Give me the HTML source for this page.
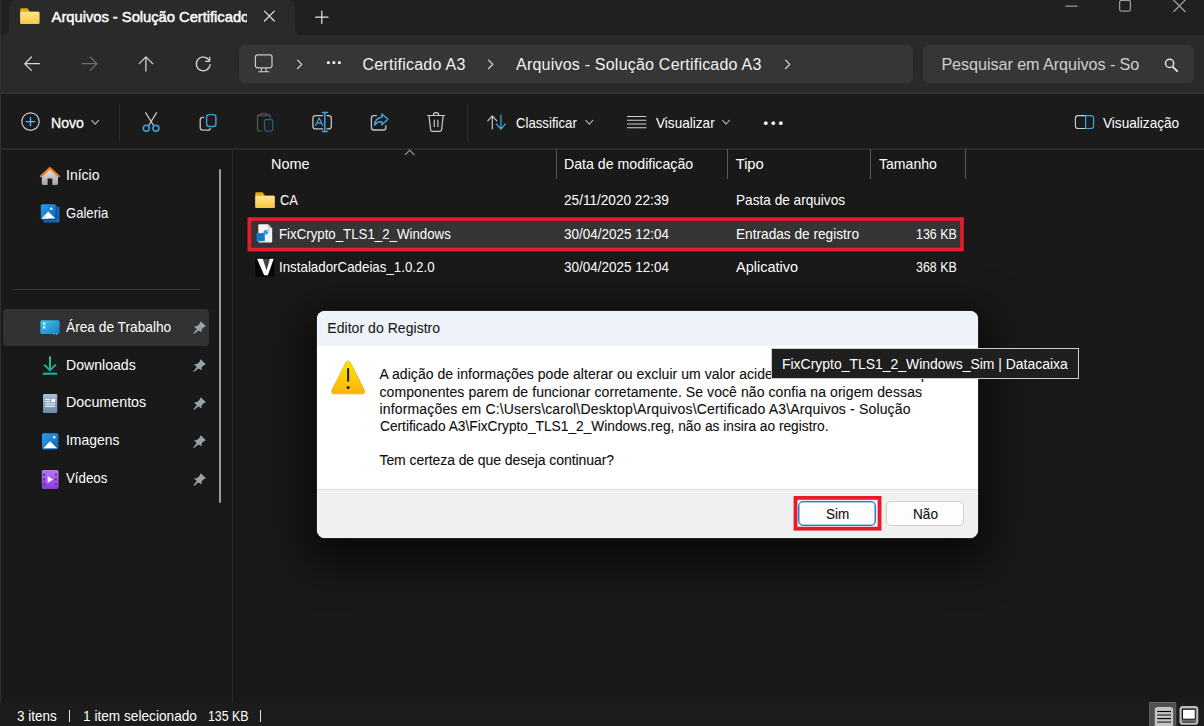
<!DOCTYPE html>
<html lang="pt-BR">
<head>
<meta charset="utf-8">
<title>Arquivos - Solução Certificado A3</title>
<style>
*{box-sizing:border-box;margin:0;padding:0}
html,body{width:1204px;height:726px;overflow:hidden;background:#191919}
body{font-family:"Liberation Sans",sans-serif;color:#fff;position:relative;font-size:14px}
.a{position:absolute}
.t{position:absolute;white-space:nowrap;line-height:1;transform-origin:0 0;}
svg{position:absolute;overflow:visible}
#titlebar{left:0;top:0;width:1204px;height:35px;background:#202020}
#tab{left:9px;top:0;width:286px;height:35px;background:#2a2a2a;border-radius:7px 7px 0 0}
#tabl{left:3px;top:29px;width:6px;height:6px;background:radial-gradient(circle at 0 0,#202020 5.6px,#2a2a2a 6.2px)}
#tabr{left:295px;top:29px;width:6px;height:6px;background:radial-gradient(circle at 100% 0,#202020 5.6px,#2a2a2a 6.2px)}
#addr{left:0;top:35px;width:1204px;height:57px;background:#2a2a2a}
#addrline{left:0;top:92px;width:1204px;height:2px;background:#323232}
#crumb{left:239px;top:45px;width:674px;height:38px;background:#363636;border-radius:6px}
#search{left:923px;top:45px;width:271px;height:38px;background:#363636;border-radius:6px}
#toolbar{left:0;top:94px;width:1204px;height:54px;background:#1b1b1b}
#toolline{left:0;top:148px;width:1204px;height:2px;background:#2a2a2a}
.vsep{width:1px;background:#2e2e2e}
#navsel{left:3px;top:309px;width:206px;height:37px;background:#323232;border-radius:4px}
#navdiv{left:12px;top:289px;width:188px;height:1px;background:#353535}
#scroll{left:219px;top:169px;width:2px;height:334px;background:#9a9a9a;border-radius:1px}
#split{left:232px;top:149px;width:1px;height:553px;background:#2b2b2b}
.csep{width:1px;top:149px;height:30px;background:#5a5a5a}
#rowsel{left:249px;top:219px;width:713px;height:30px;background:#353535}
#status{left:0;top:702px;width:1204px;height:24px;background:#1c1c1c}
#dlg{left:317px;top:311px;width:661px;height:227px;background:#fff;border-radius:8px;overflow:hidden;box-shadow:0 0 0 1px rgba(50,50,50,.6),0 14px 42px 12px rgba(0,0,0,.62)}
#dlgtitle{left:0;top:0;width:661px;height:35px;background:#eef3fa}
#dlgfoot{left:0;top:178px;width:661px;height:49px;background:#f0f0f0;border-top:1px solid #dfdfdf}
#bsim{left:798px;top:501px;width:78px;height:25px;background:#fdfdfd;border:1px solid #1f7fd6;box-shadow:inset 0 0 0 .6px #4a9be0;border-radius:5px}
#bnao{left:886px;top:501px;width:78px;height:25px;background:#fdfdfd;border:1px solid #d0d0d0;border-radius:5px}
#tip{left:771px;top:348px;width:308px;height:31px;background:#1f1f1f;border:1px solid #cdcdcd}
</style>
</head>
<body>
<div class="a" id="titlebar"></div><div class="a" id="tab"></div><div class="a" id="tabl"></div><div class="a" id="tabr"></div>
<div class="a" id="addr"></div><div class="a" id="addrline"></div><div class="a" id="crumb"></div><div class="a" id="search"></div>
<div class="a" id="toolbar"></div><div class="a" id="toolline"></div>
<div class="a vsep" style="left:119px;top:104px;height:37px"></div><div class="a vsep" style="left:467px;top:104px;height:37px"></div>
<div class="a" style="left:0;top:0;width:1px;height:726px;background:#27323a"></div>
<div class="a" style="left:48px;top:4px;width:198.5px;height:26px;overflow:hidden"><div class="t" style="left:3.6px;top:5.6px;font-size:14.8px;color:#ffffff;letter-spacing:-0.046px;-webkit-text-stroke:0.45px #ffffff;">Arquivos - Solução Certificado A3</div>
</div>
<div class="t" style="left:362.4px;top:56.5px;font-size:16px;color:#f2f2f2;letter-spacing:0.253px;">Certificado A3</div>
<div class="t" style="left:516.0px;top:56.5px;font-size:16px;color:#f2f2f2;letter-spacing:0.217px;">Arquivos - Solução Certificado A3</div>
<div class="t" style="left:941.4px;top:56.3px;font-size:16.2px;color:#cfcfcf;letter-spacing:-0.071px;">Pesquisar em Arquivos - So</div>
<div class="t" style="left:50.8px;top:115.8px;font-size:14.8px;color:#ffffff;transform:scaleX(0.9523);-webkit-text-stroke:0.3px #ffffff;">Novo</div>
<div class="t" style="left:515.8px;top:115.8px;font-size:14.8px;color:#ffffff;transform:scaleX(0.8908);">Classificar</div>
<div class="t" style="left:656.0px;top:115.8px;font-size:14.8px;color:#ffffff;transform:scaleX(0.9188);">Visualizar</div>
<div class="t" style="left:1103.4px;top:115.8px;font-size:14.8px;color:#ffffff;transform:scaleX(0.9201);">Visualização</div>
<div class="a" id="navsel"></div><div class="a" id="navdiv"></div><div class="a" id="scroll"></div><div class="a" id="split"></div>
<div class="t" style="left:65.8px;top:168.0px;font-size:14.8px;color:#ffffff;transform:scaleX(0.9470);">Início</div>
<div class="t" style="left:65.8px;top:205.7px;font-size:14.8px;color:#ffffff;transform:scaleX(0.8845);">Galeria</div>
<div class="t" style="left:65.8px;top:319.7px;font-size:14.8px;color:#ffffff;transform:scaleX(0.9266);">Área de Trabalho</div>
<div class="t" style="left:65.8px;top:357.5px;font-size:14.8px;color:#ffffff;transform:scaleX(0.9520);">Downloads</div>
<div class="t" style="left:65.8px;top:395.3px;font-size:14.8px;color:#ffffff;transform:scaleX(0.9653);">Documentos</div>
<div class="t" style="left:65.8px;top:433.4px;font-size:14.8px;color:#ffffff;transform:scaleX(0.9408);">Imagens</div>
<div class="t" style="left:65.8px;top:471.3px;font-size:14.8px;color:#ffffff;transform:scaleX(0.8985);">Vídeos</div>
<div class="a csep" style="left:556px"></div><div class="a csep" style="left:727px"></div><div class="a csep" style="left:870px"></div><div class="a csep" style="left:965px"></div>
<div class="a" id="rowsel"></div>
<div class="t" style="left:270.5px;top:157.0px;font-size:14.8px;color:#ffffff;transform:scaleX(0.9778);">Nome</div>
<div class="t" style="left:564.3px;top:157.0px;font-size:14.8px;color:#ffffff;transform:scaleX(0.9576);">Data de modificação</div>
<div class="t" style="left:735.8px;top:157.0px;font-size:14.8px;color:#ffffff;letter-spacing:-0.113px;">Tipo</div>
<div class="t" style="left:878.8px;top:157.0px;font-size:14.8px;color:#ffffff;transform:scaleX(0.9511);">Tamanho</div>
<div class="t" style="left:279.8px;top:193.3px;font-size:14.8px;color:#ffffff;transform:scaleX(0.8755);">CA</div>
<div class="t" style="left:564.3px;top:193.3px;font-size:14.8px;color:#ffffff;transform:scaleX(0.9192);">25/11/2020 22:39</div>
<div class="t" style="left:735.8px;top:193.3px;font-size:14.8px;color:#ffffff;transform:scaleX(0.9209);">Pasta de arquivos</div>
<div class="t" style="left:279.4px;top:226.7px;font-size:14.8px;color:#ffffff;transform:scaleX(0.8964);">FixCrypto_TLS1_2_Windows</div>
<div class="t" style="left:564.3px;top:226.7px;font-size:14.8px;color:#ffffff;transform:scaleX(0.9105);">30/04/2025 12:04</div>
<div class="t" style="left:735.8px;top:226.7px;font-size:14.8px;color:#ffffff;transform:scaleX(0.9229);">Entradas de registro</div>
<div class="t" style="left:915.5px;top:226.7px;font-size:14.8px;color:#ffffff;transform:scaleX(0.8384);">136 KB</div>
<div class="t" style="left:279.4px;top:260.1px;font-size:14.8px;color:#ffffff;transform:scaleX(0.9006);">InstaladorCadeias_1.0.2.0</div>
<div class="t" style="left:564.3px;top:260.1px;font-size:14.8px;color:#ffffff;transform:scaleX(0.9105);">30/04/2025 12:04</div>
<div class="t" style="left:735.8px;top:260.1px;font-size:14.8px;color:#ffffff;transform:scaleX(0.9804);">Aplicativo</div>
<div class="t" style="left:915.5px;top:260.1px;font-size:14.8px;color:#ffffff;transform:scaleX(0.8384);">368 KB</div>
<div class="a" id="status"></div>
<div class="t" style="left:17.2px;top:709.0px;font-size:14.6px;color:#ffffff;transform:scaleX(0.9253);">3 itens</div>
<div class="a" style="left:69px;top:710px;width:1px;height:12px;background:#e0e0e0"></div><div class="t" style="left:83.0px;top:709.0px;font-size:14.6px;color:#ffffff;transform:scaleX(0.9365);">1 item selecionado</div>
<div class="t" style="left:207.5px;top:709.0px;font-size:14.6px;color:#ffffff;transform:scaleX(0.8457);">135 KB</div>
<div class="a" style="left:260px;top:710px;width:1px;height:12px;background:#e0e0e0"></div>
<div class="a" id="dlg"><div class="a" id="dlgtitle"></div><div class="a" id="dlgfoot"></div></div>
<div class="t" style="left:327.3px;top:321.0px;font-size:14px;color:#1b1b1b;letter-spacing:0.044px;-webkit-text-stroke:0.1px #1b1b1b;">Editor do Registro</div>
<div class="t" style="left:379.5px;top:367.1px;font-size:14px;color:#101010;letter-spacing:0.043px;-webkit-text-stroke:0.12px #101010;">A adição de informações pode alterar ou excluir um valor acidentalmente e fazer com que</div>
<div class="t" style="left:379.5px;top:384.5px;font-size:14px;color:#101010;letter-spacing:0.080px;-webkit-text-stroke:0.12px #101010;">componentes parem de funcionar corretamente. Se você não confia na origem dessas</div>
<div class="t" style="left:379.5px;top:401.9px;font-size:14px;color:#101010;letter-spacing:0.162px;-webkit-text-stroke:0.12px #101010;">informações em C:\Users\carol\Desktop\Arquivos\Certificado A3\Arquivos - Solução</div>
<div class="t" style="left:379.5px;top:419.3px;font-size:14px;color:#101010;transform:scaleX(0.9802);-webkit-text-stroke:0.12px #101010;">Certificado A3\FixCrypto_TLS1_2_Windows.reg, não as insira ao registro.</div>
<div class="t" style="left:379.5px;top:453.4px;font-size:14px;color:#101010;letter-spacing:-0.082px;-webkit-text-stroke:0.12px #101010;">Tem certeza de que deseja continuar?</div>
<div class="a" id="bsim"></div><div class="a" id="bnao"></div>
<div class="t" style="left:825.7px;top:506.5px;font-size:14.3px;color:#101010;transform:scaleX(0.9421);-webkit-text-stroke:0.12px #101010;">Sim</div>
<div class="t" style="left:912.9px;top:506.5px;font-size:14.3px;color:#101010;transform:scaleX(0.9530);-webkit-text-stroke:0.12px #101010;">Não</div>
<div class="a" id="tip"></div>
<div class="t" style="left:782.0px;top:356.4px;font-size:15.5px;color:#ffffff;transform:scaleX(0.8999);">FixCrypto_TLS1_2_Windows_Sim | Datacaixa</div>
<svg width="1204" height="726" viewBox="0 0 1204 726" style="left:0;top:0" fill="none" stroke-linecap="round" stroke-linejoin="round">
<defs>
<linearGradient id="gFold" x1="0" y1="0" x2="0" y2="1"><stop offset="0" stop-color="#ffe694"/><stop offset="1" stop-color="#f6c640"/></linearGradient>
<linearGradient id="gWarn" x1="0" y1="0" x2="0" y2="1"><stop offset="0" stop-color="#ffe600"/><stop offset="1" stop-color="#fbb30a"/></linearGradient>
<linearGradient id="gDesk" x1="0" y1="0" x2="1" y2="1"><stop offset="0" stop-color="#44c8ee"/><stop offset="1" stop-color="#1a78bd"/></linearGradient>
<linearGradient id="gPic" x1="0" y1="0" x2="1" y2="1"><stop offset="0" stop-color="#2aa2ee"/><stop offset="1" stop-color="#0a5fb8"/></linearGradient>
<linearGradient id="gDoc" x1="0" y1="0" x2="0" y2="1"><stop offset="0" stop-color="#a9bcd3"/><stop offset="1" stop-color="#6c8aae"/></linearGradient>
<linearGradient id="gVid" x1="0" y1="0" x2="0" y2="1"><stop offset="0" stop-color="#b778f4"/><stop offset="1" stop-color="#8a3bdb"/></linearGradient>
<linearGradient id="gHome" x1="0" y1="0" x2="0" y2="1"><stop offset="0" stop-color="#e2e2e2"/><stop offset="1" stop-color="#a5a5a5"/></linearGradient>
<linearGradient id="gDl" x1="0" y1="0" x2="0" y2="1"><stop offset="0" stop-color="#2fc58d"/><stop offset="1" stop-color="#1fa79c"/></linearGradient>
</defs>
<path d="M21.4,8.2 h6.144 l2.304,3.4539999999999997 H38.199999999999996 q1.2,0 1.2,1.2 V22.7 q0,1.2 -1.2,1.2 H21.4 q-1.2,0 -1.2,-1.2 V9.399999999999999 q0,-1.2 1.2,-1.2z" fill="#e9a80c" stroke="none"/>
<path d="M21.4,11.654 H38.199999999999996 q1.2,0 1.2,1.2 V22.7 q0,1.2 -1.2,1.2 H21.4 q-1.2,0 -1.2,-1.2 V12.854 q0,-1.2 1.2,-1.2z" fill="url(#gFold)" stroke="none"/>
<path d="M264.5,11.2 L274.3,21 M274.3,11.2 L264.5,21" stroke="#e4e4e4" stroke-width="1.2"/>
<path d="M315.6,17.2 H328 M321.8,11 V23.4" stroke="#e4e4e4" stroke-width="1.2"/>
<path d="M1065.8,6.1 H1077.2" stroke="#9c9c9c" stroke-width="1.25"/>
<rect x="1119.6" y="0.4" width="10.8" height="10.7" rx="1.8" stroke="#9c9c9c" stroke-width="1.25"/>
<path d="M1173.8,0.2 L1185,11.5 M1185,0.2 L1173.8,11.5" stroke="#9c9c9c" stroke-width="1.25"/>
<path d="M39.4,63.7 H25 M31.4,57 L24.8,63.7 L31.4,70.4" stroke="#d6d6d6" stroke-width="1.25"/>
<path d="M82.2,63.7 H96.6 M90.2,57 L96.8,63.7 L90.2,70.4" stroke="#6e6e6e" stroke-width="1.25"/>
<path d="M145.9,71 V57 M139.2,63.6 L145.9,56.9 L152.6,63.6" stroke="#d6d6d6" stroke-width="1.25"/>
<path d="M209.2,60.4 A6.9,6.9 0 1 0 210.1,64.6" stroke="#d6d6d6" stroke-width="1.25"/>
<path d="M209.7,57.2 V61.3 H205.6" stroke="#d6d6d6" stroke-width="1.25"/>
<rect x="255.4" y="54.8" width="16.6" height="13" rx="2.2" stroke="#c9c9c9" stroke-width="1.25"/>
<path d="M261.4,68 V71.4 M266,68 V71.4 M258.6,71.7 H268.8" stroke="#c9c9c9" stroke-width="1.1"/>
<path d="M297.6,60.099999999999994 L301.8,64.3 L297.6,68.5" stroke="#dcdcdc" stroke-width="1.2"/>
<path d="M488.6,60.099999999999994 L492.8,64.3 L488.6,68.5" stroke="#dcdcdc" stroke-width="1.2"/>
<path d="M785.6,60.099999999999994 L789.8000000000001,64.3 L785.6,68.5" stroke="#dcdcdc" stroke-width="1.2"/>
<rect x="327.0" y="61.2" width="2.8" height="2.8" rx=".6" fill="#e8e8e8" stroke="none"/>
<rect x="332.5" y="61.2" width="2.8" height="2.8" rx=".6" fill="#e8e8e8" stroke="none"/>
<rect x="338.0" y="61.2" width="2.8" height="2.8" rx=".6" fill="#e8e8e8" stroke="none"/>
<circle cx="1169.6" cy="63.4" r="4.1" stroke="#e0e0e0" stroke-width="1.5"/><path d="M1172.8,66.8 L1177.2,71.2" stroke="#e0e0e0" stroke-width="1.9"/>
<circle cx="30.5" cy="121.6" r="8.7" stroke="#cfcfcf" stroke-width="1.2"/><path d="M26.3,121.6 H34.7 M30.5,117.4 V125.8" stroke="#4cc2ff" stroke-width="1.3"/>
<path d="M91.8,120.39999999999999 L95.2,124.2 L98.60000000000001,120.39999999999999" stroke="#b0b0b0" stroke-width="1.2"/>
<path d="M585.9,120.39999999999999 L589.3,124.2 L592.6999999999999,120.39999999999999" stroke="#b0b0b0" stroke-width="1.2"/>
<path d="M722.6,120.39999999999999 L726,124.2 L729.4,120.39999999999999" stroke="#b0b0b0" stroke-width="1.2"/>
<path d="M145.6,112.7 L153.9,126 M156.6,112.7 L148.3,126" stroke="#c4c4c4" stroke-width="1.3"/>
<circle cx="146.3" cy="128.3" r="3" stroke="#3fa4de" stroke-width="1.5"/><circle cx="155.9" cy="128.3" r="3" stroke="#3fa4de" stroke-width="1.5"/>
<path d="M203.6,117.4 H202.8 Q200.2,117.4 200.2,120 V127.6 Q200.2,130.2 202.8,130.2 H207.6 Q210,130.2 210.2,128.6" stroke="#c4c4c4" stroke-width="1.3"/>
<rect x="206.6" y="114.6" width="9.3" height="11.9" rx="2.4" stroke="#3fa4de" stroke-width="1.4"/>
<path d="M261.2,114.8 H259.6 Q257.5,114.8 257.5,116.9 V128.9 Q257.5,131 259.6,131 H261.8 M266,114.8 H268 Q270.2,114.8 270.2,116.9 V117.4" stroke="#5c5c5c" stroke-width="1.2"/>
<ellipse cx="263.6" cy="114.5" rx="2.9" ry="1.3" stroke="#5c5c5c" stroke-width="1.1"/>
<rect x="264.5" y="119.5" width="8.2" height="11.6" rx="1.8" stroke="#25607f" stroke-width="1.3"/>
<path d="M322.6,115.6 H315.6 Q312.9,115.6 312.9,118.3 V126.2 Q312.9,128.9 315.6,128.9 H322.6 M327,115.6 H328.6 Q331.3,115.6 331.3,118.3 V126.2 Q331.3,128.9 328.6,128.9 H327" stroke="#c4c4c4" stroke-width="1.3"/>
<path d="M315.6,125.4 L319.2,118 L322.8,125.4 M316.8,123.2 H321.6" stroke="#3fa4de" stroke-width="1.2"/>
<path d="M324.8,112.6 V131.4 M322.3,112.6 H327.5 M322.3,131.4 H327.5" stroke="#3fa4de" stroke-width="1.5"/>
<path d="M376.4,115.6 H374 Q371.4,115.6 371.4,118.2 V127.4 Q371.4,130 374,130 H383.2 Q385.8,130 385.8,127.4 V125.6" stroke="#c4c4c4" stroke-width="1.3"/>
<path d="M381.8,114 L388,119.3 L381.8,124.8 V121.8 Q377.2,121.4 374.6,125.2 Q375,118 381.8,117.2 Z" stroke="#3fa4de" stroke-width="1.5" fill="#1b1b1b"/>
<path d="M427.6,115.5 H444.6 M433.4,115.2 Q433.4,112.6 436.1,112.6 Q438.8,112.6 438.8,115.2 M429,115.8 L430.6,129.6 Q430.8,131.3 432.6,131.3 H439.6 Q441.4,131.3 441.6,129.6 L443.2,115.8 M434.3,120.2 V126.6 M437.9,120.2 V126.6" stroke="#c9c9c9" stroke-width="1.2"/>
<path d="M492.3,129 V116 M487.8,120.8 L492.3,115.9 L496.8,120.8" stroke="#c9c9c9" stroke-width="1.2"/>
<path d="M500.9,115.2 V128.8 M496.4,124 L500.9,129 L505.4,124" stroke="#3fa4de" stroke-width="1.2"/>
<path d="M627.4,116.4 H646" stroke="#cfcfcf" stroke-width="1.05"/>
<path d="M627.4,120.2 H646" stroke="#cfcfcf" stroke-width="1.05"/>
<path d="M627.4,124 H646" stroke="#cfcfcf" stroke-width="1.05"/>
<path d="M627.4,127.8 H646" stroke="#cfcfcf" stroke-width="1.05"/>
<circle cx="765.8" cy="123.2" r="1.9" fill="#f0f0f0" stroke="none"/>
<circle cx="773.3" cy="123.2" r="1.9" fill="#f0f0f0" stroke="none"/>
<circle cx="780.8" cy="123.2" r="1.9" fill="#f0f0f0" stroke="none"/>
<path d="M1085.6,115.7 H1078.2 Q1075.4,115.7 1075.4,118.5 V125.7 Q1075.4,128.5 1078.2,128.5 H1085.6" stroke="#c9c9c9" stroke-width="1.2"/>
<path d="M1085.6,115.7 H1090.8 Q1093.6,115.7 1093.6,118.5 V125.7 Q1093.6,128.5 1090.8,128.5 H1085.6 Z" stroke="#3fa4de" stroke-width="1.2"/>
<path d="M405.4,154.6 L409.7,150.2 L414,154.6" stroke="#9a9a9a" stroke-width="1.2"/>
<path d="M41.8,176.4 L49.9,169 L58,176.4 V183.6 Q58,184.9 56.7,184.9 H52.3 V178.4 H47.6 V184.9 H43.1 Q41.8,184.9 41.8,183.6 Z" fill="url(#gHome)" stroke="none"/>
<path d="M41,176.2 L49.9,168 L58.8,176.2" stroke="#f2801c" stroke-width="2.2"/>
<rect x="43.2" y="206.4" width="16.2" height="16.2" rx="1.6" fill="#1565c0" stroke="none"/>
<rect x="40.6" y="203.9" width="15.6" height="15.8" rx="1.6" fill="url(#gPic)" stroke="#191919" stroke-width=".5"/>
<path d="M41.6,218.6 L48.2,211.6 L55.4,218.6 Z" fill="#fff" stroke="none"/><path d="M41.4,218.9 L44.8,215.2 L48.3,218.9Z" fill="#cfe6fa" stroke="none"/><rect x="50.2" y="207.6" width="2.2" height="2.2" fill="#fff" stroke="none"/>
<rect x="40.4" y="320.2" width="19.2" height="13.8" rx="1.6" fill="url(#gDesk)" stroke="none"/><rect x="43" y="322.6" width="2.4" height="2" fill="#fff" stroke="none"/><rect x="43" y="326.4" width="2.4" height="2" fill="#fff" stroke="none"/><rect x="53.6" y="333.4" width="1" height="1.2" fill="#9fdcf4" stroke="none"/><rect x="56" y="333.4" width="1" height="1.2" fill="#9fdcf4" stroke="none"/>
<path d="M50,356.2 V370 M44.2,364.6 L50,370.4 L55.8,364.6" stroke="url(#gDl)" stroke-width="2" stroke-linecap="butt" stroke-linejoin="miter"/><path d="M43,373.7 H57.2" stroke="#23b090" stroke-width="2.1" stroke-linecap="butt"/>
<rect x="43" y="394" width="14.2" height="19" rx="1.2" fill="url(#gDoc)" stroke="none"/><path d="M45.2,399.5 H49.8 M45.2,401.5 H49.8 M45.2,403.9 H55 M45.2,406.3 H55" stroke="#fff" stroke-width="1" stroke-linecap="butt"/><rect x="51.4" y="399" width="3.6" height="3" fill="#fff" stroke="none"/>
<rect x="42" y="433.2" width="16.4" height="16.2" rx="1.6" fill="url(#gPic)" stroke="none"/><path d="M43.4,448.2 L50,441.2 L57.2,448.2 Z" fill="#fff" stroke="none"/><circle cx="54.2" cy="437.3" r="1.3" fill="#e8f4ff" stroke="none"/>
<rect x="41.8" y="470" width="16.8" height="18.9" rx="1.6" fill="url(#gVid)" stroke="none"/>
<circle cx="44.1" cy="474.6" r="1.05" fill="#5b2a98" stroke="none"/>
<circle cx="44.1" cy="479.4" r="1.05" fill="#5b2a98" stroke="none"/>
<circle cx="44.1" cy="484.1" r="1.05" fill="#5b2a98" stroke="none"/>
<circle cx="55.9" cy="474.6" r="1.05" fill="#5b2a98" stroke="none"/>
<circle cx="55.9" cy="479.4" r="1.05" fill="#5b2a98" stroke="none"/>
<circle cx="55.9" cy="484.1" r="1.05" fill="#5b2a98" stroke="none"/>
<path d="M47.6,476 L53.3,479.4 L47.6,483 Z" fill="#f3eafd" stroke="none"/>
<path d="M200.7,321.2 L205.9,326.2 L203.4,327.4 L201.6,329.4 L201.4,332.3 L198.4,330.4 L194,334 L193.3,333.3 L196.8,328.9 L194,326.6 L197,325.9 L199.4,324Z" fill="#97a3ab" stroke="none"/>
<path d="M200.7,359.2 L205.9,364.2 L203.4,365.4 L201.6,367.4 L201.4,370.3 L198.4,368.4 L194,372 L193.3,371.3 L196.8,366.9 L194,364.6 L197,363.9 L199.4,362Z" fill="#97a3ab" stroke="none"/>
<path d="M200.7,397.2 L205.9,402.2 L203.4,403.4 L201.6,405.4 L201.4,408.3 L198.4,406.4 L194,410 L193.3,409.3 L196.8,404.9 L194,402.6 L197,401.9 L199.4,400Z" fill="#97a3ab" stroke="none"/>
<path d="M200.7,435.2 L205.9,440.2 L203.4,441.4 L201.6,443.4 L201.4,446.3 L198.4,444.4 L194,448 L193.3,447.3 L196.8,442.9 L194,440.6 L197,439.9 L199.4,438Z" fill="#97a3ab" stroke="none"/>
<path d="M200.7,473.2 L205.9,478.2 L203.4,479.4 L201.6,481.4 L201.4,484.3 L198.4,482.4 L194,486 L193.3,485.3 L196.8,480.9 L194,478.6 L197,477.9 L199.4,476Z" fill="#97a3ab" stroke="none"/>
<path d="M256.5,192.2 h6.207999999999999 l2.328,3.4539999999999997 H273.5 q1.2,0 1.2,1.2 V206.7 q0,1.2 -1.2,1.2 H256.5 q-1.2,0 -1.2,-1.2 V193.39999999999998 q0,-1.2 1.2,-1.2z" fill="#e9a80c" stroke="none"/>
<path d="M256.5,195.654 H273.5 q1.2,0 1.2,1.2 V206.7 q0,1.2 -1.2,1.2 H256.5 q-1.2,0 -1.2,-1.2 V196.85399999999998 q0,-1.2 1.2,-1.2z" fill="url(#gFold)" stroke="none"/>
<path d="M259.4,224.2 H268 L272.2,228.4 V241.4 Q272.2,242.5 271.1,242.5 H259.4 Q258.3,242.5 258.3,241.4 V225.3 Q258.3,224.2 259.4,224.2Z" fill="#f4f4f4" stroke="none"/><path d="M268,224.2 V228.4 H272.2Z" fill="#c9c9c9" stroke="none"/>
<rect x="256.6" y="233" width="8.2" height="8.2" fill="#1a87d6" stroke="none"/><path d="M256.6,235.8 H264.8 M256.6,238.5 H264.8 M259.4,233 V241.2 M262.1,233 V241.2" stroke="#0a5fa8" stroke-width=".6" stroke-linecap="butt"/>
<path d="M265.6,229.6 L268.6,232.6 L266.2,235 L263.2,232 Z" fill="#2d96e0" stroke="none"/><path d="M268,229 L269.6,230.6 L268.6,231.6 L267,230Z" fill="#6cbcf2" stroke="none"/>
<rect x="255.4" y="257.6" width="19" height="19.2" rx="1" fill="#060606" stroke="none"/><path d="M262.6,258.8 H270 L266.4,270.5Z" fill="#777" fill-opacity=".55" stroke="none"/><path d="M257,258.8 H262.8 L266.5,270.2 L269.9,258.8 H273.7 L267.9,275.3 H264.2 Z" fill="#fff" stroke="none"/>
<rect x="1150" y="702.5" width="25.8" height="24" fill="#4f4f4f" stroke="#676767" stroke-width="1"/>
<rect x="1154.8" y="707" width="18.4" height="21" rx="2.6" fill="#c5c2c2" stroke="none"/>
<path d="M1157.2,711.5 H1171" stroke="#000" stroke-width="1.1" stroke-linecap="butt"/>
<path d="M1157.2,715 H1171" stroke="#4a4a4a" stroke-width="1.5" stroke-linecap="butt"/>
<path d="M1157.2,718.6 H1171" stroke="#000" stroke-width="1.1" stroke-linecap="butt"/>
<path d="M1157.2,722.1 H1171" stroke="#4a4a4a" stroke-width="1.5" stroke-linecap="butt"/>
<rect x="1180.5" y="707" width="16.8" height="16.8" rx="2.4" fill="#6e6e6e" stroke="#bdbdbd" stroke-width="2"/>
<rect x="1182.9" y="709.3" width="12.4" height="9.9" fill="#fff" stroke="#000" stroke-width=".9"/>
<path d="M1182.6,722.2 H1195.4" stroke="#444" stroke-width="1.2" stroke-linecap="butt"/>
<rect x="249.35" y="219.1" width="712.6" height="30.5" stroke="#e51c2b" stroke-width="3.7" stroke-linejoin="miter"/>
<rect x="795.5" y="497.9" width="84.1" height="30.8" stroke="#e51c2b" stroke-width="3.8" stroke-linejoin="miter"/>
<path d="M345.9,362.6 Q348.15,359.2 350.4,362.6 L364.1,389.6 Q366.2,393.8 361.6,393.8 H334.7 Q330.1,393.8 332.2,389.6 Z" fill="url(#gWarn)" stroke="#eaa30c" stroke-width=".7"/>
<path d="M348.15,368.2 V381.6" stroke="#1b1b2b" stroke-width="2" stroke-linecap="butt"/><circle cx="348.15" cy="387.5" r="1.55" fill="#1b1b2b" stroke="none"/>
</svg>
</body>
</html>
